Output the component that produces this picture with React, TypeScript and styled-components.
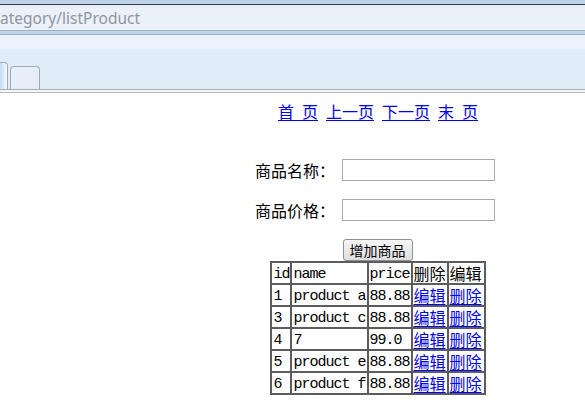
import React from "react";
import styled, { createGlobalStyle } from "styled-components";

const GlobalStyle = createGlobalStyle`
  html, body { margin: 0; padding: 0; background: #ffffff; overflow: hidden; }
  body { font-family: "Noto Sans CJK SC", "Liberation Sans", sans-serif; }
`;

const Chrome = styled.div`
  display: flex;
  flex-direction: column;
  width: 100%;
`;

const TopBand = styled.div`
  height: 4px;
  background: #bcd3ea;
  border-bottom: 1px solid #3c4048;
`;

const AddressBar = styled.div`
  height: 25px;
  background: linear-gradient(#e4ebf3 0px, #eaf1f9 3px, #eaf1f9 100%);
  border-bottom: 1px solid #a6b0bd;
  display: flex;
  align-items: center;
`;

const UrlText = styled.span`
  font-family: "Noto Sans", "Liberation Sans", sans-serif;
  font-size: 15.5px;
  color: #8f959e;
  line-height: 18px;
  margin-top: 1px;
`;

const BlueBand = styled.div`
  height: 3px;
  background: #bcd4ec;
  border-bottom: 1px solid #a2aebd;
`;

const TabArea = styled.div`
  height: 54px;
  background: linear-gradient(#eaf2fc 0px, #eaf2fc 14px, #e0ecf8 14px, #e0ecf8 100%);
  border-bottom: 1px solid #a6adb5;
  display: flex;
  align-items: flex-end;
  gap: 2px;
`;

const Tab = styled.div<{ $active?: boolean; $w: number; $h: number }>`
  width: ${(p) => p.$w}px;
  height: ${(p) => p.$h}px;
  box-sizing: border-box;
  border: 1px solid #a4a9b0;
  border-bottom: none;
  border-left: ${(p) => (p.$active ? "none" : "1px solid #a4a9b0")};
  border-radius: ${(p) => (p.$active ? "0 4px 0 0" : "4px 4px 0 0")};
  background: ${(p) =>
    p.$active
      ? "linear-gradient(90deg, #c4dcf4, #f4f9ff)"
      : "#e6eff9"};
`;

const ChromeGap = styled.div`
  height: 2px;
  background: #f6f6f6;
  border-bottom: 1px solid #b6b6b6;
`;

const Page = styled.div`
  width: 585px;
  box-sizing: border-box;
  padding-left: 171px;
  display: flex;
  flex-direction: column;
  align-items: center;
  font-family: "Noto Sans CJK SC", "Liberation Sans", sans-serif;
  font-size: 16px;
  color: #000;
`;

const Pager = styled.div`
  margin-top: 9px;
  display: flex;
  gap: 8px;
  line-height: 18px;
`;

const Link = styled.a`
  color: #0000ee;
  text-decoration: underline;
  text-underline-offset: 2px;
  white-space: pre;
  cursor: pointer;
`;

const Form = styled.div`
  margin-top: 39px;
  display: flex;
  flex-direction: column;
  gap: 18px;
  padding-right: 6px;
`;

const FormRow = styled.div`
  display: flex;
  align-items: center;
  height: 22px;
  gap: 7px;
`;

const Label = styled.span`
  width: 80px;
  line-height: 18px;
  white-space: nowrap;
`;

const TextInput = styled.input`
  width: 153px;
  height: 22px;
  box-sizing: border-box;
  border: 1px solid #a9a9a9;
  padding: 0 2px;
  margin: 0;
  background: #fff;
`;

const AddButton = styled.button`
  margin-top: 18px;
  margin-left: -1px;
  height: 22px;
  width: 70px;
  padding: 0;
  box-sizing: border-box;
  border: 1px solid #8e8f8f;
  border-radius: 3px;
  background: linear-gradient(#f6f6f6, #dedede);
  font-family: "Noto Sans CJK SC", sans-serif;
  font-size: 14px;
  line-height: 18px;
  color: #000;
`;

const Table = styled.table`
  border-collapse: separate;
  border-spacing: 0;
  border: 1px solid #5c5c5c;
  font-size: 16px;
`;

const Cell = styled.td<{ $latin?: boolean }>`
  border: 1px solid #5c5c5c;
  padding: ${(p) => (p.$latin ? "4px 1px 0 1px" : "1px")};
  height: ${(p) => (p.$latin ? "16px" : "18px")};
  line-height: ${(p) => (p.$latin ? "16px" : "18px")};
  text-align: left;
  vertical-align: top;
  white-space: pre;
  font-family: ${(p) =>
    p.$latin
      ? `"Liberation Mono", "DejaVu Sans Mono", monospace`
      : `"Noto Sans CJK SC", sans-serif`};
  font-size: ${(p) => (p.$latin ? "15px" : "16px")};
  letter-spacing: ${(p) => (p.$latin ? "-1px" : "0")};
`;

const products = [
  { id: "1", name: "product a", price: "88.88" },
  { id: "3", name: "product c", price: "88.88" },
  { id: "4", name: "7", price: "99.0" },
  { id: "5", name: "product e", price: "88.88" },
  { id: "6", name: "product f", price: "88.88" },
];

export default function App() {
  return (
    <>
      <GlobalStyle />
      <Chrome>
        <TopBand />
        <AddressBar>
          <UrlText>ategory/listProduct</UrlText>
        </AddressBar>
        <BlueBand />
        <TabArea>
          <Tab $active $w={8} $h={27} />
          <Tab $w={30} $h={23} />
        </TabArea>
        <ChromeGap />
      </Chrome>
      <Page>
        <Pager>
          <Link>{"首\u2002页"}</Link>
          <Link>上一页</Link>
          <Link>下一页</Link>
          <Link>{"末\u2002页"}</Link>
        </Pager>
        <Form>
          <FormRow>
            <Label>商品名称：</Label>
            <TextInput type="text" />
          </FormRow>
          <FormRow>
            <Label>商品价格：</Label>
            <TextInput type="text" />
          </FormRow>
        </Form>
        <AddButton>增加商品</AddButton>
        <Table>
          <tbody>
            <tr>
              <Cell $latin style={{ width: 16 }}>id</Cell>
              <Cell $latin style={{ width: 72 }}>name</Cell>
              <Cell $latin style={{ width: 40 }}>price</Cell>
              <Cell style={{ width: 32 }}>删除</Cell>
              <Cell style={{ width: 33 }}>编辑</Cell>
            </tr>
            {products.map((p) => (
              <tr key={p.id}>
                <Cell $latin>{p.id}</Cell>
                <Cell $latin>{p.name}</Cell>
                <Cell $latin>{p.price}</Cell>
                <Cell>
                  <Link>编辑</Link>
                </Cell>
                <Cell>
                  <Link>删除</Link>
                </Cell>
              </tr>
            ))}
          </tbody>
        </Table>
      </Page>
    </>
  );
}
